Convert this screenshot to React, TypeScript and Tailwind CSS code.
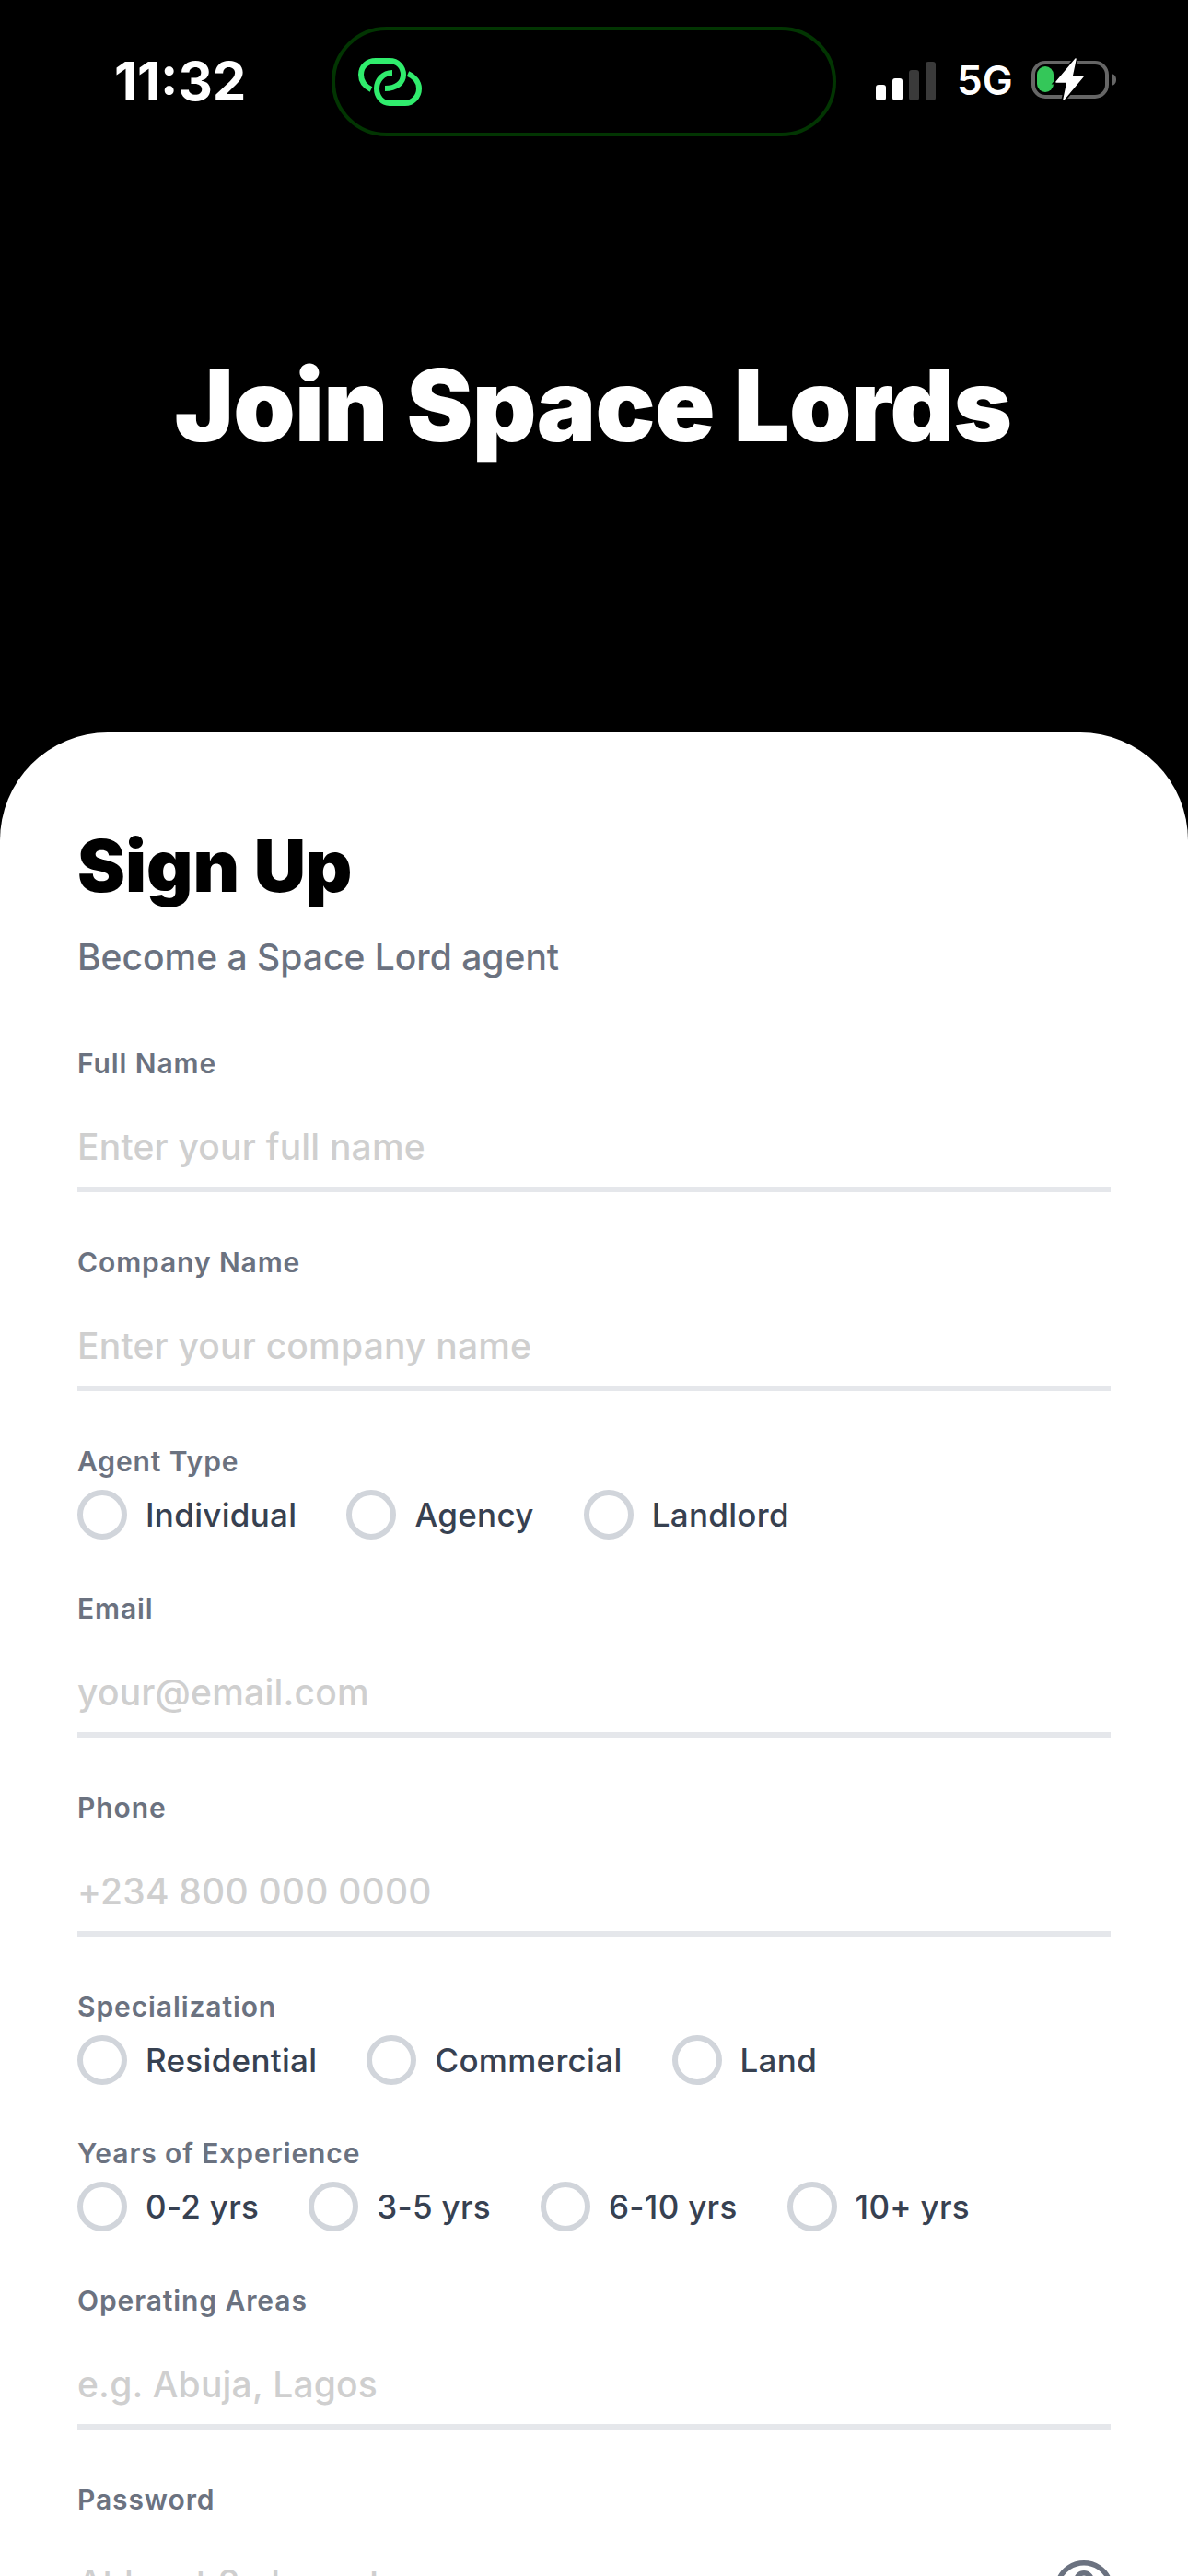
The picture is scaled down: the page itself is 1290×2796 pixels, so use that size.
import { Eye } from "lucide-react";

function LinkLogo() {
  return (
    <svg width="90" height="70" viewBox="0 0 90 70" fill="none" stroke="#30ec6d" strokeWidth="6">
      <path d="M23 42 C15 38 12 32 12 26 C12 17 19 11 28 11 H43 C52 11 58 18 58 26 C58 35 50 41 38 41" />
      <path d="M63 25 C70 28 75 34 75 41 C75 50 68 57 60 57 H43 C35 57 29 50 29 41 C29 32 36 24 46 24" />
    </svg>
  );
}

function StatusIcons() {
  return (
    <div className="flex items-end">
      <div className="flex items-end gap-[7px] mb-[3px]">
        <div className="w-[11px] h-[17px] rounded-[3px] bg-white" />
        <div className="w-[11px] h-[24px] rounded-[3px] bg-white" />
        <div className="w-[11px] h-[33px] rounded-[3px] bg-[#3a3a3a]" />
        <div className="w-[11px] h-[42px] rounded-[3px] bg-[#3a3a3a]" />
      </div>
      <span className="ml-[23px] w-[59px] text-[44px] leading-[50px] font-semibold text-white">5G</span>
      <svg className="ml-[20px]" width="96" height="50" viewBox="0 0 96 50" fill="none">
        <rect x="4" y="6" width="80" height="37" rx="13" stroke="#666666" strokeWidth="4" />
        <rect x="8" y="10" width="18" height="28" rx="9" fill="#34c759" />
        <path d="M89 18 C93 19 94 22 94 24.5 C94 27 93 30 89 31 Z" fill="#666666" />
        <path d="M50 2 L29 27 H41 L37 46 L58 21 H46 Z" fill="#000000" stroke="#000000" strokeWidth="5" />
        <path d="M50 2 L29 27 H41 L37 46 L58 21 H46 Z" fill="#ffffff" stroke="#ffffff" strokeWidth="1.5" strokeLinejoin="round" />
      </svg>
    </div>
  );
}

function FieldLabel({ children }: { children: string }) {
  return <p className="text-[30px] leading-[42px] font-semibold text-[#6b7280] tracking-[0.9px]">{children}</p>;
}

function TextField({ label, placeholder, secure }: { label: string; placeholder: string; secure?: boolean }) {
  return (
    <div className="mb-[55px]">
      <FieldLabel>{label}</FieldLabel>
      <div className="relative h-[119px] pt-[46px] border-b-[6px] border-[#e5e7eb]">
        <p className="text-[39px] leading-[48px] font-medium tracking-[0.2px] text-[#cfcfcf]">{placeholder}</p>
        {secure && <Eye size={66} strokeWidth={2} className="absolute right-[-4px] top-[34px] text-[#6b7280]" />}
      </div>
    </div>
  );
}

function RadioGroup({ label, options }: { label: string; options: string[] }) {
  return (
    <div className="mb-[53.5px]">
      <FieldLabel>{label}</FieldLabel>
      <div className="flex items-center gap-[54px] mt-[10px]">
        {options.map((option) => (
          <div key={option} className="flex items-center gap-[20px]">
            <div className="w-[54px] h-[54px] rounded-full border-[6px] border-[#d1d5db]" />
            <span className="text-[35px] leading-[54px] font-medium tracking-[0.3px] text-[#374151]">{option}</span>
          </div>
        ))}
      </div>
    </div>
  );
}

export default function App() {
  return (
    <div className="w-[1290px] h-[2796px] overflow-hidden bg-black font-['Inter','Noto_Sans',sans-serif]">
      {/* Status bar */}
      <div className="h-[150px] relative">
        <span className="absolute left-[124px] top-[56px] text-[58px] leading-[64px] font-bold text-white">11:32</span>
        <div className="absolute left-[360px] top-[29px] w-[548px] h-[119px] rounded-[60px] border-[4px] border-[#023502] flex items-center pl-[16px] pt-[3px]">
          <LinkLogo />
        </div>
        <div className="absolute left-[951px] top-[62px]">
          <StatusIcons />
        </div>
      </div>

      {/* Header */}
      <div className="h-[645px] flex justify-center pt-[225px] pr-[2px]">
        <h1 className="text-[108px] leading-[130px] font-black tracking-[-0.7px] text-white">Join Space Lords</h1>
      </div>

      {/* Form sheet */}
      <div className="bg-white rounded-t-[117px] px-[84px] pt-[102px]">
        <h2 className="text-[78px] leading-[86px] font-black text-black">Sign Up</h2>
        <p className="mt-[28px] text-[39px] leading-[56px] font-medium text-[#6b7280]">Become a Space Lord agent</p>
        <div className="mt-[66px]">
          <TextField label="Full Name" placeholder="Enter your full name" />
          <TextField label="Company Name" placeholder="Enter your company name" />
          <RadioGroup label="Agent Type" options={["Individual", "Agency", "Landlord"]} />
          <TextField label="Email" placeholder="your@email.com" />
          <TextField label="Phone" placeholder="+234 800 000 0000" />
          <RadioGroup label="Specialization" options={["Residential", "Commercial", "Land"]} />
          <RadioGroup label="Years of Experience" options={["0-2 yrs", "3-5 yrs", "6-10 yrs", "10+ yrs"]} />
          <TextField label="Operating Areas" placeholder="e.g. Abuja, Lagos" />
          <TextField label="Password" placeholder="At least 8 characters" secure />
        </div>
      </div>
    </div>
  );
}
